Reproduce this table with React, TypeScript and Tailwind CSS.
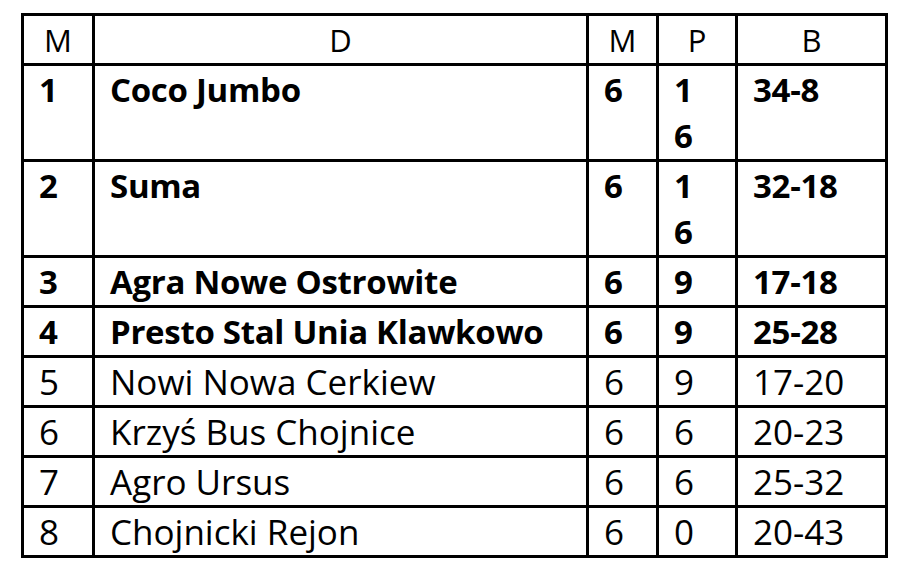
import React from 'react';

type Row = { pos: string; team: string; m: string; p: string[]; b: string; bold: boolean };

const rows: Row[] = [
  { pos: '1', team: 'Coco Jumbo', m: '6', p: ['1', '6'], b: '34-8', bold: true },
  { pos: '2', team: 'Suma', m: '6', p: ['1', '6'], b: '32-18', bold: true },
  { pos: '3', team: 'Agra Nowe Ostrowite', m: '6', p: ['9'], b: '17-18', bold: true },
  { pos: '4', team: 'Presto Stal Unia Klawkowo', m: '6', p: ['9'], b: '25-28', bold: true },
  { pos: '5', team: 'Nowi Nowa Cerkiew', m: '6', p: ['9'], b: '17-20', bold: false },
  { pos: '6', team: 'Krzyś Bus Chojnice', m: '6', p: ['6'], b: '20-23', bold: false },
  { pos: '7', team: 'Agro Ursus', m: '6', p: ['6'], b: '25-32', bold: false },
  { pos: '8', team: 'Chojnicki Rejon', m: '6', p: ['0'], b: '20-43', bold: false },
];

const cell = 'border-[3px] border-black align-top px-[15px] pt-[1px] pb-0 whitespace-nowrap';

export default function App() {
  return (
    <div className="w-[900px] h-[572px] bg-white pt-[13px] pl-[21px] font-['Open_Sans','Liberation_Sans',sans-serif] leading-[46px] text-black">
      <table className="table-fixed border-collapse w-[864px]">
        <colgroup>
          <col className="w-[71px]" />
          <col className="w-[494px]" />
          <col className="w-[70px]" />
          <col className="w-[79px]" />
          <col className="w-[150px]" />
        </colgroup>
        <thead>
          <tr>
            {['M', 'D', 'M', 'P', 'B'].map((h, i) => (
              <th key={i} className={`${cell} font-normal text-center text-[31px]`}>
                {h}
              </th>
            ))}
          </tr>
        </thead>
        <tbody>
          {rows.map((r) => (
            <tr key={r.pos} className={r.bold ? 'font-bold text-[33px] tracking-[-0.3px]' : 'font-normal text-[35px] tracking-[0px]'}>
              <td className={cell}>{r.pos}</td>
              <td className={cell}>{r.team}</td>
              <td className={cell}>{r.m}</td>
              <td className={cell}>
                {r.p.map((v, i) => (
                  <div key={i}>{v}</div>
                ))}
              </td>
              <td className={cell}>{r.b}</td>
            </tr>
          ))}
        </tbody>
      </table>
    </div>
  );
}
